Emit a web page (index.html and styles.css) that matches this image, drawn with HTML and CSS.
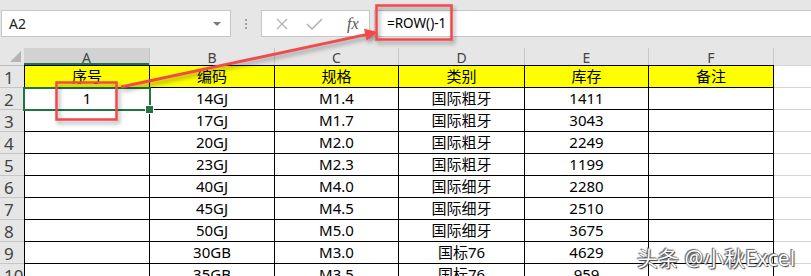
FILE: index.html
```html
<!DOCTYPE html>
<html lang="zh-CN">
<head>
    <meta charset="UTF-8">
    <meta name="viewport" content="width=device-width, initial-scale=1.0">
    <title>ROW() 序号</title>
    <link rel="stylesheet" href="styles.css">
</head>
<body>
<div class="app">
    <div class="formula-bar">
        <div class="name-box">
            <span>A2</span>
            <span class="caret"></span>
        </div>
        <div class="grip"><i></i><i></i><i></i></div>
        <div class="fx-buttons">
            <svg class="btn-cancel" width="12" height="12" viewBox="0 0 12 12">
                <path d="M1 1 L11 11 M11 1 L1 11" stroke="#b3b3b3" stroke-width="1.3" fill="none"/>
            </svg>
            <svg class="btn-enter" width="17" height="12" viewBox="0 0 17 12">
                <path d="M1 6 L6 11 L16 1" stroke="#b3b3b3" stroke-width="1.6" fill="none"/>
            </svg>
            <span class="btn-fx">fx</span>
        </div>
        <div class="formula-input">=ROW()-1</div>
    </div>

    <div class="sheet">
        <div class="corner"><span></span></div>
        <div class="hd sel">A</div>
        <div class="hd">B</div>
        <div class="hd">C</div>
        <div class="hd">D</div>
        <div class="hd">E</div>
        <div class="hd">F</div>
        <div class="hd last"></div>

        <div class="rh r1">1</div>
        <div class="c a r1">序号</div>
        <div class="c r1">编码</div>
        <div class="c r1">规格</div>
        <div class="c r1">类别</div>
        <div class="c r1">库存</div>
        <div class="c r1">备注</div>
        <div class="x r1x"></div>

        <div class="rh">2</div>
        <div class="c a active">1</div>
        <div class="c">14GJ</div>
        <div class="c">M1.4</div>
        <div class="c">国际粗牙</div>
        <div class="c">1411</div>
        <div class="c"></div>
        <div class="x"></div>

        <div class="rh">3</div>
        <div class="c a"></div>
        <div class="c">17GJ</div>
        <div class="c">M1.7</div>
        <div class="c">国际粗牙</div>
        <div class="c">3043</div>
        <div class="c"></div>
        <div class="x"></div>

        <div class="rh">4</div>
        <div class="c a"></div>
        <div class="c">20GJ</div>
        <div class="c">M2.0</div>
        <div class="c">国际粗牙</div>
        <div class="c">2249</div>
        <div class="c"></div>
        <div class="x"></div>

        <div class="rh">5</div>
        <div class="c a"></div>
        <div class="c">23GJ</div>
        <div class="c">M2.3</div>
        <div class="c">国际粗牙</div>
        <div class="c">1199</div>
        <div class="c"></div>
        <div class="x"></div>

        <div class="rh">6</div>
        <div class="c a"></div>
        <div class="c">40GJ</div>
        <div class="c">M4.0</div>
        <div class="c">国际细牙</div>
        <div class="c">2280</div>
        <div class="c"></div>
        <div class="x"></div>

        <div class="rh">7</div>
        <div class="c a"></div>
        <div class="c">45GJ</div>
        <div class="c">M4.5</div>
        <div class="c">国际细牙</div>
        <div class="c">2510</div>
        <div class="c"></div>
        <div class="x"></div>

        <div class="rh">8</div>
        <div class="c a"></div>
        <div class="c">50GJ</div>
        <div class="c">M5.0</div>
        <div class="c">国际细牙</div>
        <div class="c">3675</div>
        <div class="c"></div>
        <div class="x"></div>

        <div class="rh">9</div>
        <div class="c a"></div>
        <div class="c">30GB</div>
        <div class="c">M3.0</div>
        <div class="c">国标76</div>
        <div class="c">4629</div>
        <div class="c"></div>
        <div class="x"></div>

        <div class="rh">10</div>
        <div class="c a"></div>
        <div class="c">35GB</div>
        <div class="c">M3.5</div>
        <div class="c">国标76</div>
        <div class="c">959</div>
        <div class="c"></div>
        <div class="x"></div>
    </div>

    <!-- annotation layer: red boxes + arrow drawn over the sheet -->
    <svg class="marks" width="811" height="276" viewBox="0 0 811 276">
        <g class="mark-shadow" fill="none" stroke="#f24a4c">
            <rect x="56.5" y="82.5" width="60" height="37" stroke-width="2.5"/>
            <rect x="376.5" y="5.5" width="75" height="34" stroke-width="2.5"/>
            <line x1="121" y1="87" x2="366" y2="34.6" stroke-width="3"/>
            <polygon points="378,32 366.6,40.6 364,28.8" fill="#f24a4c" stroke="none"/>
        </g>
    </svg>

    <div class="watermark">头条 @小秋Excel</div>
</div>
</body>
</html>
```

FILE: styles.css
```css
* {
    margin: 0;
    padding: 0;
    box-sizing: border-box;
}
body {
    font-family: "Noto Sans", "Noto Sans CJK SC", sans-serif;
    background: #e6e6e6;
    color: #000;
    overflow: hidden;
}
.app {
    position: relative;
    width: 811px;
    height: 276px;
    overflow: hidden;
}

/* ---------- formula bar ---------- */
.formula-bar {
    display: flex;
    height: 27px;
    margin: 10px 0 11px;
    padding-left: 1px;
}
.name-box {
    width: 230px;
    background: #fff;
    border: 1px solid #c6c6c6;
    display: flex;
    align-items: center;
    justify-content: space-between;
    padding: 0 9px 0 7px;
    font-size: 14px;
    color: #222;
}
.caret {
    width: 0;
    height: 0;
    border-left: 4px solid transparent;
    border-right: 4px solid transparent;
    border-top: 4px solid #7a7a7a;
}
.grip {
    width: 30px;
    display: flex;
    flex-direction: column;
    align-items: center;
    justify-content: center;
    gap: 2px;
}
.grip i {
    display: block;
    width: 2px;
    height: 2px;
    background: #a2a2a2;
}
.fx-buttons {
    width: 109px;
    background: #fff;
    border: 1px solid #c6c6c6;
    display: flex;
    align-items: center;
}
.btn-cancel {
    margin-left: 14px;
}
.btn-enter {
    margin-left: 18px;
}
.btn-fx {
    margin-left: 24px;
    font-family: "Liberation Serif", serif;
    font-style: italic;
    font-size: 16px;
    color: #555;
    line-height: 1;
}
.formula-input {
    flex: 1;
    margin-left: 4px;
    background: #fff;
    border: 1px solid #c6c6c6;
    border-right: none;
    padding-left: 12px;
    font-size: 13.5px;
    line-height: 25px;
}

/* ---------- sheet grid ---------- */
.sheet {
    display: grid;
    grid-template-columns: 24px 126px 125px 124px 126px 124px 125px 1fr;
    grid-template-rows: 17px 23px repeat(9, 22px);
    background: #fff;
}
.corner {
    background: #e6e6e6;
    position: relative;
}
.corner span {
    position: absolute;
    right: 3px;
    bottom: 3px;
    width: 0;
    height: 0;
    border-left: 11px solid transparent;
    border-bottom: 11px solid #b5b5b5;
}
.hd {
    background: #e6e6e6;
    border-right: 1px solid #c6c6c6;
    text-align: center;
    font-size: 14px;
    line-height: 17px;
    padding-top: 1px;
    color: #444;
}
.hd.sel {
    background: #d2d2d2;
    box-shadow: inset 0 -2px #217346;
    color: #3a4a42;
}
.hd.last {
    border-right: none;
}
.rh {
    background: #e6e6e6;
    border-bottom: 1px solid #c6c6c6;
    font-size: 17px;
    line-height: 18px;
    padding: 3px 0 0 4px;
    color: #444;
    overflow: hidden;
}
.rh.r1 {
    border-top: 1px solid #bcbcbc;
}
.c {
    border-right: 1px solid #000;
    border-bottom: 1px solid #000;
    text-align: center;
    font-size: 15px;
    line-height: 20px;
    white-space: nowrap;
}
.c.a {
    border-left: 1px solid #000;
}
.c.r1 {
    background: #ffff00;
    border-top: 1px solid #000;
}
.x {
    border-bottom: 1px solid #d4d4d4;
}
.x.r1x {
    border-top: 1px solid #d4d4d4;
}
.c.active {
    position: relative;
    z-index: 1;
    outline: 2px solid #217346;
    outline-offset: -1px;
}
.c.active::after {
    content: '';
    position: absolute;
    right: -5px;
    bottom: -5px;
    width: 7px;
    height: 7px;
    background: #217346;
    border: 1px solid #fff;
}

/* ---------- overlays ---------- */
.marks {
    position: absolute;
    left: 0;
    top: 0;
    pointer-events: none;
    z-index: 2;
}
.mark-shadow {
    filter: drop-shadow(2px 3px 2px rgba(0,0,0,0.35));
}
.watermark {
    position: absolute;
    left: 637px;
    top: 242px;
    z-index: 3;
    font-size: 21px;
    color: #fff;
    white-space: nowrap;
    text-shadow: 0 0 1px #333, 1px 1px 1px #444, -1px -1px 1px #666;
}
```
